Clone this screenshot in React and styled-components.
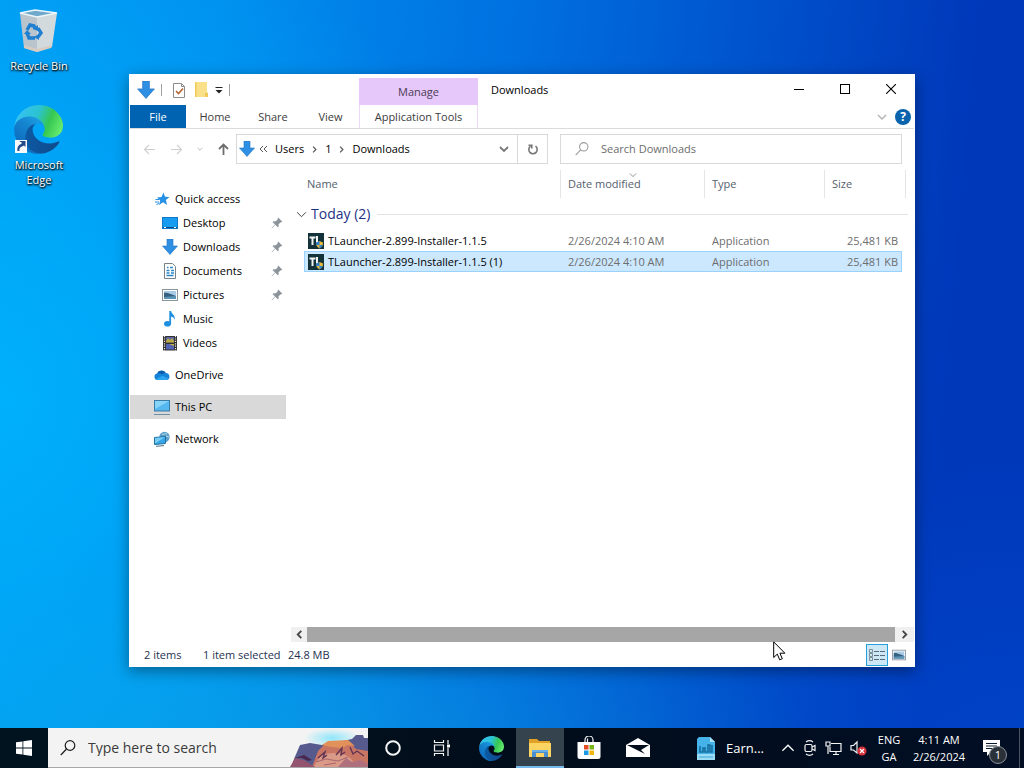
import React from 'react'
import styled, { createGlobalStyle, css } from 'styled-components'

const GlobalStyle = createGlobalStyle`
  * {
    box-sizing: border-box;
  }

  body {
    margin: 0;
    font-family: 'Open Sans', 'Noto Sans', sans-serif;
    font-size: 11px;
    line-height: 16px;
    color: #1b1b1b;
  }

  button,
  input {
    font: inherit;
    color: inherit;
    margin: 0;
    padding: 0;
    border: 0;
    background: none;
    outline: none;
  }

  a {
    color: inherit;
    text-decoration: none;
  }

  svg {
    display: block;
    flex: none;
  }
`

const Screen = styled.div`
  display: flex;
  flex-direction: column;
  height: 100vh;
  overflow: hidden;
  background:
    radial-gradient(ellipse 50% 30% at 30% 100%, rgba(20, 180, 225, 0.4), rgba(20, 180, 225, 0) 100%),
    radial-gradient(ellipse 40% 40% at 100% 100%, rgba(0, 90, 225, 0.35), rgba(0, 90, 225, 0) 100%),
    radial-gradient(ellipse 50% 70% at 0% 52%, rgba(0, 184, 255, 0.75), rgba(0, 170, 255, 0) 100%),
    linear-gradient(95deg, #009af2 0%, #008eee 20%, #0070e0 48%, #0052cc 70%, #0038ba 90%, #0038ba 100%);
`

const Desktop = styled.main`
  position: relative;
  flex: 1;
  min-height: 0;
`

const Shortcuts = styled.nav`
  display: flex;
  flex-direction: column;
  align-items: center;
  gap: 32px;
  width: 78px;
  padding-top: 8px;
`

const Shortcut = styled.a`
  display: flex;
  flex-direction: column;
  align-items: center;
  gap: 2px;
  color: #fff;
  line-height: 15px;
  text-align: center;
  text-shadow: 0 1px 2px #000, 1px 1px 2px #000;
`

const Window = styled.section`
  position: absolute;
  top: 74px;
  right: 109px;
  bottom: 61px;
  left: 129px;
  display: flex;
  flex-direction: column;
  padding: 0 1px;
  background: #fff;
  box-shadow: 0 4px 14px rgba(0, 0, 0, 0.4);
`

const TitleBar = styled.header`
  display: flex;
  height: 31px;
`

const QuickTools = styled.div`
  display: flex;
  align-items: center;
  gap: 6px;
  width: 229px;
  padding-left: 7px;
`

const Divider = styled.span`
  width: 1px;
  height: 12px;
  margin-right: 3px;
  background: #a0a0a0;
`

const ToolButton = styled.button`
  display: flex;
  align-items: center;
  justify-content: center;
`

const ManageTab = styled.div`
  display: flex;
  align-items: center;
  justify-content: center;
  width: 119px;
  margin-top: 4px;
  background: #e7c8fb;
  color: #4a3b55;
`

const Title = styled.h1`
  flex: 1;
  margin: 0;
  padding: 8px 0 0 13px;
  font-size: 11px;
  font-weight: 400;
  color: #000;
`

const WindowButton = styled.button`
  display: flex;
  align-items: center;
  justify-content: center;
  width: 46px;
  height: 30px;
`

const Ribbon = styled.div`
  display: flex;
  height: 24px;
  border-bottom: 1px solid #dadbdc;
`

const Tab = styled.button`
  width: ${props => props.$width}px;
  height: 23px;
  color: #3c3c3c;

  ${props => props.$kind === 'file' && css`
    background: #0063b1;
    color: #fff;
  `}

  ${props => props.$kind === 'tools' && css`
    border: solid #ecd9f8;
    border-width: 0 1px;
  `}
`

const RibbonEnd = styled.div`
  display: flex;
  align-items: center;
  gap: 8px;
  margin-left: auto;
  padding-right: 3px;
`

const HelpButton = styled.button`
  width: 16px;
  height: 16px;
  border-radius: 50%;
  background: #0a64ad;
  color: #fff;
  font-size: 12px;
  font-weight: 700;
`

const Navigation = styled.div`
  display: grid;
  grid-template-columns: 106px minmax(0, 312fr) 12px minmax(0, 342fr);
  height: 41px;
  padding: 5px 12px 6px 0;
`

const History = styled.div`
  display: flex;
  align-items: center;
  justify-content: space-between;
  padding: 0 6px 0 13px;
`

const Address = styled.div`
  display: flex;
  align-items: center;
  border: 1px solid #d9d9d9;
`

const Crumbs = styled.div`
  display: flex;
  flex: 1;
  align-items: center;
  gap: 7px;
  padding-left: 2px;
  color: #000;
`

const CrumbRoot = styled.span`
  display: flex;
  align-items: center;
  gap: 4px;
`

const Refresh = styled.button`
  display: flex;
  align-items: center;
  justify-content: center;
  align-self: stretch;
  width: 30px;
  margin-left: 8px;
  border-left: 1px solid #d9d9d9;
`

const SearchBox = styled.label`
  display: flex;
  grid-column: 4;
  align-items: center;
  gap: 12px;
  padding-left: 14px;
  border: 1px solid #d9d9d9;

  input {
    flex: 1;
    min-width: 0;
  }

  input::placeholder {
    color: #6d6d6d;
    opacity: 1;
  }
`

const Body = styled.div`
  display: flex;
  flex: 1;
  min-height: 0;
`

const Tree = styled.nav`
  display: flex;
  flex-direction: column;
  width: 156px;
  padding-top: 17px;
  color: #000;
`

const TreeItem = styled.a`
  display: flex;
  align-items: center;
  gap: 5px;
  height: 24px;
  margin-top: ${props => (props.$root ? 8 : 0)}px;
  padding: 0 3px 0 ${props => (props.$child ? 32 : 24)}px;
  background: ${props => (props.$active ? '#d9d9d9' : 'transparent')};

  span {
    flex: 1;
  }
`

const Pane = styled.div`
  display: flex;
  flex: 1;
  flex-direction: column;
  min-width: 0;
  padding-left: 5px;
`

const Listing = styled.div`
  flex: 1;
  min-height: 0;
  padding: 0 6px 0 5px;
  overflow: hidden;
`

const Table = styled.table`
  display: block;
  border-spacing: 0;

  thead,
  tbody {
    display: block;
  }

  th,
  td {
    padding: 0;
    font-weight: 400;
    text-align: left;
  }
`

const columns = css`
  display: grid;
  grid-template-columns: 257px 144px 120px 1fr;
  align-items: center;
  margin-left: 8px;
`

const HeadRow = styled.tr`
  ${columns}
  height: 28px;
  margin-right: 2px;
`

const HeadCell = styled.th`
  position: relative;
  height: 28px;
  line-height: 28px;
  border-right: 1px solid #e5e5e5;
  color: #53616e;

  && {
    padding-left: ${props => (props.$first ? 3 : 7)}px;
  }

  svg {
    position: absolute;
    top: 1px;
    left: 50%;
    margin-left: -4px;
  }
`

const GroupRow = styled.tr`
  display: block;

  th {
    display: flex;
    align-items: center;
    gap: 4px;
    height: 32px;
    color: #1e3287;
    font-size: 14px;
  }

  th::after {
    content: '';
    flex: 1;
    height: 1px;
    margin-left: 3px;
    background: #e2e2e2;
  }
`

const FileRow = styled.tr`
  ${columns}
  height: 21px;
  margin-right: 6px;
  border: 1px solid ${props => (props.$selected ? '#99d1ff' : 'transparent')};
  background: ${props => (props.$selected ? '#cce8ff' : 'transparent')};
  color: #6d6d6d;

  && td {
    padding-left: 6px;
  }

  && td:first-child {
    display: flex;
    align-items: center;
    gap: 4px;
    padding-left: 3px;
    color: #000;
  }

  && td:last-child {
    padding-right: 3px;
    text-align: right;
  }
`

const ScrollBar = styled.div`
  display: flex;
  height: 15px;
  background: #f0f0f0;
`

const ScrollButton = styled.button`
  display: flex;
  align-items: center;
  justify-content: center;
  width: ${props => props.$width}px;
`

const Thumb = styled.div`
  flex: 1;
  background: #a6a6a6;
`

const StatusBar = styled.footer`
  display: flex;
  align-items: center;
  height: 25px;
  padding: 0 4px 0 14px;
  color: #1e3250;
`

const Status = styled.span`
  width: ${props => props.$width}px;
  white-space: nowrap;
`

const ViewButton = styled.button`
  display: flex;
  align-items: center;
  justify-content: center;
  width: 22px;
  height: 22px;
  border: 1px solid ${props => (props.$active ? '#26a0da' : 'transparent')};
  background: ${props => (props.$active ? '#cce8f6' : 'transparent')};
`

const ViewButtons = styled.div`
  display: flex;
  margin-left: auto;
`

const Pointer = styled.svg`
  position: absolute;
  top: 641px;
  left: 773px;
`

const TaskBar = styled.footer`
  display: flex;
  height: 40px;
  background: linear-gradient(90deg, #00131f, #020d1b 50%, #010e24);
  color: #fff;
`

const TaskSearch = styled.label`
  display: flex;
  align-items: center;
  gap: 12px;
  width: 320px;
  padding-left: 12px;
  background: #f3f3f3;
  box-shadow: inset 0 -1px #a8a8a8;
  color: #1b1b1b;
  font-size: 14px;

  input {
    flex: 1;
    min-width: 0;
  }

  input::placeholder {
    color: #3b3b3b;
    opacity: 1;
  }
`

const TaskButtons = styled.div`
  display: flex;
  gap: 1px;
  padding-left: 1px;
`

const TaskButton = styled.button`
  display: flex;
  align-items: center;
  justify-content: center;
  width: 48px;
  height: 40px;
  background: ${props => (props.$active ? '#34434e' : 'transparent')};
  box-shadow: ${props => (props.$active ? 'inset 0 -2px #76b9ed' : 'none')};
`

const Tray = styled.div`
  display: flex;
  align-items: center;
  margin-left: auto;
`

const News = styled.button`
  display: flex;
  align-items: center;
  gap: 10px;
  margin-right: 17px;
  font-size: 13px;
`

const TrayIcons = styled.div`
  display: flex;
  align-items: center;
  gap: 8px;
  margin-right: 10px;
`

const TrayText = styled.button`
  width: ${props => props.$width}px;
  line-height: 17px;
  text-align: center;
`

const Notifications = styled.button`
  position: relative;
  display: flex;
  align-items: flex-start;
  width: 42px;
  height: 40px;
  padding: 11px 0 0 6px;
`

const Badge = styled.span`
  position: absolute;
  top: 18px;
  left: 12px;
  width: 18px;
  height: 18px;
  border: 1px solid #8a9098;
  border-radius: 50%;
  background: #2b3138;
  text-align: center;
`

const ShowDesktop = styled.button`
  width: 5px;
  height: 40px;
  border-left: 1px solid #4b5563;
`

function EdgeIcon({ size, id }) {
  return (
    <svg width={size} height={size} viewBox="0 0 256 256">
      <defs>
        <linearGradient id={`${id}-a`} x1="60" y1="180" x2="231" y2="180" gradientUnits="userSpaceOnUse">
          <stop offset="0" stopColor="#0c59a4" />
          <stop offset="1" stopColor="#114a8b" />
        </linearGradient>
        <linearGradient id={`${id}-b`} x1="150" y1="90" x2="40" y2="220" gradientUnits="userSpaceOnUse">
          <stop offset="0" stopColor="#1b9de2" />
          <stop offset="0.4" stopColor="#1484cf" />
          <stop offset="1" stopColor="#0f6cbf" />
        </linearGradient>
        <linearGradient id={`${id}-c`} x1="20" y1="50" x2="240" y2="140" gradientUnits="userSpaceOnUse">
          <stop offset="0" stopColor="#35c1f1" />
          <stop offset="0.4" stopColor="#2bc3d2" />
          <stop offset="0.7" stopColor="#36c752" />
          <stop offset="1" stopColor="#66eb6e" />
        </linearGradient>
      </defs>
      <path fill={`url(#${id}-b)`} d="M105.73 241.42a79.2 79.2 0 0 1-22.74-21.34 80.72 80.72 0 0 1 29.96-120.04c3.13-1.47 8.45-4.13 15.54-4a32.36 32.36 0 0 1 25.69 13 31.88 31.88 0 0 1 6.36 18.66c0-.21 24.46-79.6-80-79.6-43.9 0-80 41.66-80 78.22a130.16 130.16 0 0 0 12.11 56 128 128 0 0 0 156.38 67.11 75.55 75.55 0 0 1-62.78-8z" />
      <path fill={`url(#${id}-a)`} d="M231.05 190.54c-3.38 1.76-6.86 3.32-10.43 4.67a101.22 101.22 0 0 1-35.63 6.46c-46.98 0-87.9-32.32-87.9-73.79a31.4 31.4 0 0 1 16.37-27.31c-42.49 1.79-53.4 46.07-53.4 72.01 0 73.34 67.59 80.78 82.15 80.78 7.86 0 19.7-2.28 26.81-4.53l1.3-.44a128.34 128.34 0 0 0 66.48-52.8 4 4 0 0 0-5.75-5.05z" />
      <path fill={`url(#${id}-c)`} d="M152.33 148.86c-.81 1.05-3.3 2.5-3.3 5.66 0 2.61 1.7 5.12 4.72 7.23 14.38 10 41.49 8.68 41.56 8.68a59.56 59.56 0 0 0 30.27-8.35A61.38 61.38 0 0 0 256 109.32c.26-22.41-8-37.31-11.34-43.91C223.46 23.93 177.72 0 128 0A128 128 0 0 0 0 126.2c.48-36.54 36.8-66.05 80-66.05 3.5 0 23.46.34 42 10.07 16.34 8.58 24.9 18.94 30.85 29.21 6.18 10.67 7.28 24.15 7.28 29.52 0 5.37-2.74 13.33-7.8 19.91z" />
    </svg>
  )
}

function BinIcon() {
  return (
    <svg width="48" height="48" viewBox="0 0 48 48">
      <path d="M5 5l17 3v36l-3-1-10-3z" fill="#b9c4cc" />
      <path d="M22 8l20-3-5 34-15 5z" fill="#d3dade" />
      <path d="M9 37l13 4 15-4-1 3-14 4-13-4z" fill="#d8cbc2" />
      <path d="M5 5l15-3 22 3-20 4z" fill="#6fa9cc" stroke="#eef6fa" strokeWidth="1.4" />
      <g fill="none" stroke="#1f7fd0" strokeWidth="3.4">
        <path d="M12 22l3-5 4 1 1 3" />
        <path d="M23 20l3 5-3 4" />
        <path d="M20 30l-6 0-2-5" />
      </g>
      <path d="M18 21l5 2 0-6zM24 26l-5 3 5 3zM9 26l3-4 4 4z" fill="#1f7fd0" />
    </svg>
  )
}

function EdgeShortcutIcon() {
  return (
    <svg width="50" height="50" viewBox="0 0 50 50">
      <EdgeIcon size={49} id="edge-desktop" />
      <rect x="1" y="35" width="12" height="13" fill="#f7f9fb" />
      <path d="M3.500 46c-.5-4 1-6.500 4-7V37H6l-.5-1h6v6l-1.500-1.500-1.500.8C6 42 5 43.500 5.500 46z" fill="#244a8c" />
    </svg>
  )
}

function DownArrow({ size = 16 }) {
  return (
    <svg width={size} height={size} viewBox="0 0 16 16">
      <path d="M5 0h6v7h4.500L8 15.500.5 7H5z" fill="#2f8fe3" stroke="#2273c4" strokeWidth=".6" />
    </svg>
  )
}

function Chevron({ dir = 'down', size = 10, color = '#555', width = 1 }) {
  const turn = { down: 0, left: 90, up: 180, right: 270 }[dir]
  return (
    <svg width={size} height={size} viewBox="0 0 10 10">
      <path d="M1 3l4 4 4-4" fill="none" stroke={color} strokeWidth={width} transform={`rotate(${turn} 5 5)`} />
    </svg>
  )
}

function Arrow({ dir, color }) {
  const turn = { left: 0, up: 90, right: 180 }[dir]
  return (
    <svg width="13" height="13" viewBox="0 0 13 13">
      <g transform={`rotate(${turn} 6.500 6.500)`} fill="none" stroke={color} strokeWidth={dir === 'up' ? 1.8 : 1.1}>
        <path d="M1.500 6.500H12M6 2L1.500 6.500 6 11" />
      </g>
    </svg>
  )
}

function Lens({ size, color }) {
  return (
    <svg width={size} height={size} viewBox="0 0 16 16" fill="none" stroke={color} strokeWidth="1.200">
      <circle cx="10" cy="5.500" r="4.800" />
      <path d="M6.500 9L.8 15" />
    </svg>
  )
}

function PinIcon() {
  return (
    <svg width="12" height="12" viewBox="0 0 12 12" fill="#8c949b">
      <path d="M7.500.8l3.700 3.700-.8.9-.8-.2-2 2 .1 2.200-.9.8-2.400-2.400L1 11.300l-.4-.4 3.400-3.500L1.700 5l.8-.8 2.300.1 2-2-.2-.7z" />
    </svg>
  )
}

function PictureIcon({ size = 16 }) {
  return (
    <svg width={size} height={size} viewBox="0 0 16 16">
      <rect x=".5" y="2.500" width="15" height="11" fill="#fff" stroke="#8a959e" />
      <rect x="2" y="4" width="12" height="8" fill="#a9cbe6" />
      <path d="M2 6c3-1 6 1 12 3v3H2z" fill="#35607f" />
      <path d="M2 10l12-1v3H2z" fill="#5c94b8" />
    </svg>
  )
}

const treeIcons = {
  quick: (
    <svg width="16" height="16" viewBox="0 0 16 16">
      <path d="M9.500 1.500l1.500 4.200 4.500.3-3.600 3 1.200 5-4-2.700L5 14l1.200-4.600L3 6.400l4.500-.5z" fill="#2590e4" />
      <path d="M1.500 8.500h3.500M1 11h4M2.500 13.500l2.500-1" stroke="#2590e4" />
    </svg>
  ),
  desktop: (
    <svg width="16" height="16" viewBox="0 0 16 16">
      <rect x=".5" y="2.500" width="15" height="11" fill="#189cf0" stroke="#0f78c8" />
      <path d="M1 12.500h14" stroke="#0a4c86" />
      <path d="M2 12.500h2m8 0h2" stroke="#fff" />
    </svg>
  ),
  downloads: <DownArrow />,
  documents: (
    <svg width="16" height="16" viewBox="0 0 16 16">
      <path d="M2.500.5h8l3 3v12h-11z" fill="#fff" stroke="#77828b" />
      <path d="M8 4.500h3M5 4.500h1.500M4.500 7.500h3M9 7.500h3M4.500 10h3M9 10h3M4.500 12.500h7" stroke="#2d86c8" strokeWidth="1.400" />
    </svg>
  ),
  pictures: <PictureIcon />,
  music: (
    <svg width="16" height="16" viewBox="0 0 16 16">
      <ellipse cx="5.500" cy="12.700" rx="3.500" ry="2.800" fill="#1e8fe0" />
      <path d="M7.300 0h1.800c.2 3 4.500 4 3.700 9-.7-2.500-2-3-3.700-3.500v7.500H7.300z" fill="#1e8fe0" />
    </svg>
  ),
  videos: (
    <svg width="16" height="16" viewBox="0 0 16 16">
      <rect x="1" y="1" width="14" height="14.500" fill="#32302f" />
      <path d="M2.500 1v15M13.500 1v15" stroke="#e8e8e8" strokeWidth="1.200" strokeDasharray="1.200 1.200" />
      <rect x="4" y="2" width="8" height="5.500" fill="#5a63a8" />
      <rect x="4" y="9" width="8" height="5.500" fill="#5363b4" />
      <path d="M4 6l2-3 2 2 2-2 2 3v1.500H4z" fill="#b9aa42" />
      <path d="M7 9h5v2z" fill="#c5b24a" />
    </svg>
  ),
  onedrive: (
    <svg width="16" height="16" viewBox="0 0 16 16">
      <path d="M3.500 13A3.300 3.300 0 0 1 3 6.500 5 5 0 0 1 11.800 6 3.600 3.600 0 0 1 13 13z" fill="#1583d8" />
      <path d="M3 6.600A5 5 0 0 1 11.800 6c-1.500 0-2.500.5-3.500 1.300C6.500 6.200 4.800 6.200 3 6.600z" fill="#0a5cac" />
      <path d="M2 12l6.500-3.300 6 2.900c-.5 1-1 1.400-2 1.400h-9z" fill="#29a6ee" />
    </svg>
  ),
  pc: (
    <svg width="16" height="16" viewBox="0 0 16 16">
      <rect x=".5" y="1.500" width="15" height="10.500" fill="#55b8ee" stroke="#3c7ba6" />
      <path d="M1 2h14L1 10z" fill="#86d4f8" />
      <path d="M0 15.500h16" stroke="#6d8da3" />
    </svg>
  ),
  network: (
    <svg width="16" height="16" viewBox="0 0 16 16">
      <circle cx="10.500" cy="6" r="5.200" fill="#5b9fc9" />
      <path d="M8 3c2 1 3-1 5 0M12 5l3 1" stroke="#b9dceb" fill="none" />
      <path d="M.5 6.500l11-1v7l-11 1z" fill="#35a5e8" stroke="#226f9f" />
      <path d="M1 7l10-1-9 6H1z" fill="#77cdf6" />
      <path d="M2 15.300l8-.7" stroke="#45718c" />
    </svg>
  ),
}

const tree = [
  { icon: 'quick', label: 'Quick access' },
  { icon: 'desktop', label: 'Desktop', child: true, pinned: true },
  { icon: 'downloads', label: 'Downloads', child: true, pinned: true },
  { icon: 'documents', label: 'Documents', child: true, pinned: true },
  { icon: 'pictures', label: 'Pictures', child: true, pinned: true },
  { icon: 'music', label: 'Music', child: true },
  { icon: 'videos', label: 'Videos', child: true },
  { icon: 'onedrive', label: 'OneDrive', root: true },
  { icon: 'pc', label: 'This PC', root: true, active: true },
  { icon: 'network', label: 'Network', root: true },
]

const files = [
  { name: 'TLauncher-2.899-Installer-1.1.5' },
  { name: 'TLauncher-2.899-Installer-1.1.5 (1)', selected: true },
]

function InstallerIcon() {
  return (
    <svg width="16" height="16" viewBox="0 0 16 16">
      <rect width="16" height="16" fill="#14323a" />
      <path d="M1.500 4.500h6M4.500 4v8M9 3v7" stroke="#f2f6f7" strokeWidth="2" />
      <path d="M8 9.500l3.500-1.500L15 9.500c0 3-1 4.500-3.500 6C9 14 8 12.500 8 9.500z" fill="#e9bd3a" />
      <path d="M11.500 8v4H8.300C8 11 8 10 8 9.500zM11.500 12h3.200c-.5 1.500-1.500 2.500-3.200 3.500z" fill="#2d7fd0" />
    </svg>
  )
}

function Explorer() {
  return (
    <Window aria-label="Downloads">
      <TitleBar>
        <QuickTools>
          <DownArrow size={18} />
          <Divider />
          <ToolButton aria-label="Properties">
            <svg width="16" height="16" viewBox="0 0 16 16">
              <path d="M2.500 1.500h8l3 3v11h-11z" fill="#fff" stroke="#8c8c8c" />
              <path d="M10.500 1.500v3h3" fill="none" stroke="#8c8c8c" />
              <path d="M5 9l2.500 2.500L12 6.500" fill="none" stroke="#b5652f" strokeWidth="1.600" />
            </svg>
          </ToolButton>
          <ToolButton aria-label="New folder">
            <svg width="16" height="16" viewBox="0 0 16 16">
              <path d="M2 0h12v10l1 1v4H2z" fill="#fbe08a" />
              <path d="M2 0h1.500v15H2zM12 11h3v4h-3z" fill="#f0ca58" />
            </svg>
          </ToolButton>
          <ToolButton aria-label="Customize toolbar">
            <svg width="8" height="8" viewBox="0 0 8 8">
              <path d="M.5 1.500h7" stroke="#222" />
              <path d="M.5 4h7L4 7.500z" fill="#222" />
            </svg>
          </ToolButton>
          <Divider />
        </QuickTools>
        <ManageTab>Manage</ManageTab>
        <Title>Downloads</Title>
        <WindowButton aria-label="Minimize">
          <svg width="10" height="10"><path d="M0 5.500h10" stroke="#000" /></svg>
        </WindowButton>
        <WindowButton aria-label="Maximize">
          <svg width="10" height="10"><rect x=".5" y=".5" width="9" height="9" fill="none" stroke="#000" /></svg>
        </WindowButton>
        <WindowButton aria-label="Close">
          <svg width="10" height="10"><path d="M0 0l10 10m0-10L0 10" stroke="#000" strokeWidth="1.100" /></svg>
        </WindowButton>
      </TitleBar>

      <Ribbon>
        <Tab $kind="file" $width={56}>File</Tab>
        <Tab $width={58}>Home</Tab>
        <Tab $width={58}>Share</Tab>
        <Tab $width={57}>View</Tab>
        <Tab $kind="tools" $width={119}>Application Tools</Tab>
        <RibbonEnd>
          <Chevron color="#b4b4b4" width={1.500} />
          <HelpButton aria-label="Help">?</HelpButton>
        </RibbonEnd>
      </Ribbon>

      <Navigation>
        <History>
          <ToolButton aria-label="Back"><Arrow dir="left" color="#cfcfcf" /></ToolButton>
          <ToolButton aria-label="Forward"><Arrow dir="right" color="#cfcfcf" /></ToolButton>
          <ToolButton aria-label="Recent locations"><Chevron size={6} color="#b5b5b5" width={1.500} /></ToolButton>
          <ToolButton aria-label="Up"><Arrow dir="up" color="#6e6e6e" /></ToolButton>
        </History>
        <Address>
          <Crumbs>
            <CrumbRoot>
              <DownArrow />
              <svg width="9" height="8" viewBox="0 0 9 8">
                <path d="M4 1L1 4l3 3M8 1L5 4l3 3" fill="none" stroke="#555" />
              </svg>
            </CrumbRoot>
            <a href="#users">Users</a>
            <Chevron dir="right" size={7} width={1.700} />
            <a href="#1">1</a>
            <Chevron dir="right" size={7} width={1.700} />
            <a href="#downloads">Downloads</a>
          </Crumbs>
          <ToolButton aria-label="Previous locations"><Chevron color="#777" width={1.800} /></ToolButton>
          <Refresh aria-label="Refresh">
            <svg width="12" height="12" viewBox="0 0 12 12" fill="none" stroke="#777" strokeWidth="1.600">
              <path d="M8.500 3.200a4.200 4.200 0 1 1-5 0" />
              <path d="M1.500 2.200h3.300v3.300" />
            </svg>
          </Refresh>
        </Address>
        <SearchBox>
          <Lens size={14} color="#9a9a9a" />
          <input type="text" placeholder="Search Downloads" aria-label="Search Downloads" />
        </SearchBox>
      </Navigation>

      <Body>
        <Tree>
          {tree.map(item => (
            <TreeItem
              key={item.label}
              href={`#${item.icon}`}
              $child={item.child}
              $root={item.root}
              $active={item.active}
            >
              {treeIcons[item.icon]}
              <span>{item.label}</span>
              {item.pinned && <PinIcon />}
            </TreeItem>
          ))}
        </Tree>
        <Pane>
          <Listing>
            <Table>
              <thead>
                <HeadRow>
                  <HeadCell $first>Name</HeadCell>
                  <HeadCell>
                    Date modified
                    <Chevron size={8} color="#7a7a7a" />
                  </HeadCell>
                  <HeadCell>Type</HeadCell>
                  <HeadCell>Size</HeadCell>
                </HeadRow>
              </thead>
              <tbody>
                <GroupRow>
                  <th colSpan="4">
                    <Chevron size={11} color="#444" width={0.9} />
                    Today (2)
                  </th>
                </GroupRow>
                {files.map(file => (
                  <FileRow key={file.name} $selected={file.selected}>
                    <td>
                      <InstallerIcon />
                      {file.name}
                    </td>
                    <td>2/26/2024 4:10 AM</td>
                    <td>Application</td>
                    <td>25,481 KB</td>
                  </FileRow>
                ))}
              </tbody>
            </Table>
          </Listing>
          <ScrollBar>
            <ScrollButton $width={16} aria-label="Scroll left"><Chevron dir="left" size={9} color="#444" width={2} /></ScrollButton>
            <Thumb />
            <ScrollButton $width={19} aria-label="Scroll right"><Chevron dir="right" size={9} color="#444" width={2} /></ScrollButton>
          </ScrollBar>
        </Pane>
      </Body>

      <StatusBar>
        <Status $width={59}>2 items</Status>
        <Status $width={85}>1 item selected</Status>
        <Status>24.8 MB</Status>
        <ViewButtons>
          <ViewButton $active aria-label="Details">
            <svg width="18" height="14" viewBox="0 0 18 14" fill="none" stroke="#5c6b78">
              <path d="M1.500 1.500h3v3h-3zM1.500 5.500h3v3h-3zM1.500 9.500h3v3h-3z" stroke="#7d8b96" />
              <path d="M6 3.500h5M12 3.500h5M6 7.500h5M12 7.500h5M6 11.500h5M12 11.500h5" />
            </svg>
          </ViewButton>
          <ViewButton aria-label="Large icons"><PictureIcon size={14} /></ViewButton>
        </ViewButtons>
      </StatusBar>
    </Window>
  )
}

function Canyon() {
  return (
    <svg width="78" height="38" viewBox="0 0 78 38">
      <defs>
        <radialGradient id="canyon-sky">
          <stop offset="0" stopColor="#8fe6fa" />
          <stop offset="1" stopColor="#8fe6fa" stopOpacity="0" />
        </radialGradient>
      </defs>
      <ellipse cx="42" cy="9" rx="28" ry="10" fill="url(#canyon-sky)" />
      <path d="M4 30l6-14 10-2 12 2 30-6 4-4h7l1 3h4v29H2z" fill="#565a8c" />
      <path d="M22 38l6-16 8-8 22-2 8 8 12 2v16z" fill="#c97563" />
      <path d="M32 16l6-4 20-1 7 6-8-1-4 3-12-1z" fill="#e2915b" />
      <path d="M24 38c4-10 9-14 20-14s18 4 22 14z" fill="#d99a87" />
      <path d="M28 29l7-6-2 6 4-3M46 26l6-7-1 7 4-3M60 18l3 7 4-3 7 5" fill="none" stroke="#613453" strokeWidth="1.400" />
      <path d="M26 33l10-3 12 2 10-4M34 36l12-2" fill="none" stroke="#a86570" />
      <path d="M0 38l5-9 9 2 11 7z" fill="#94536e" />
      <path d="M5 29l9-3 8 5-4 1-6-3z" fill="#49284e" />
      <path d="M48 38l8-9 6 4 8-2 8 4v3z" fill="#b06f7d" />
    </svg>
  )
}

function Taskbar() {
  return (
    <TaskBar>
      <TaskButton aria-label="Start">
        <svg width="16" height="16" viewBox="0 0 16 16" fill="#fff">
          <path d="M0 2.300l6.500-.9v6.200H0zM7.300 1.300L16 0v7.600H7.300zM0 8.400h6.500v6.200L0 13.700zM7.300 8.400H16V16l-8.700-1.300z" />
        </svg>
      </TaskButton>
      <TaskSearch>
        <Lens size={16} color="#1b1b1b" />
        <input type="text" placeholder="Type here to search" aria-label="Type here to search" />
        <Canyon />
      </TaskSearch>
      <TaskButtons>
        <TaskButton aria-label="Cortana">
          <svg width="16" height="16"><circle cx="8" cy="8" r="6.800" fill="none" stroke="#f4f4f4" strokeWidth="2" /></svg>
        </TaskButton>
        <TaskButton aria-label="Task view">
          <svg width="18" height="16" viewBox="0 0 18 16" fill="none" stroke="#f4f4f4" strokeWidth="1.200">
            <path d="M1.500 0v2.500h9V0M1.500 16v-2.500h9V16M1.500 5h9v6h-9zM15 0v4M15 8v8" />
            <path d="M14 4.500h3v3h-3z" fill="#fff" stroke="none" />
          </svg>
        </TaskButton>
        <TaskButton aria-label="Microsoft Edge"><EdgeIcon size={25} id="edge-taskbar" /></TaskButton>
        <TaskButton $active aria-label="File Explorer">
          <svg width="24" height="20" viewBox="0 0 24 20">
            <path d="M1 1h8l2 2h11v4H1z" fill="#e0a126" />
            <path d="M1 5h22v14H1z" fill="#fcd462" />
            <path d="M4 19v-7h16v7h-4v-4H8v4z" fill="#4a90cf" />
            <path d="M4 12h16v2H4z" fill="#69aee6" />
          </svg>
        </TaskButton>
        <TaskButton aria-label="Microsoft Store">
          <svg width="24" height="24" viewBox="0 0 24 24">
            <path d="M8 7V4a4 4 0 0 1 8 0v3M10.500 6V2.500" fill="none" stroke="#f4f4f4" strokeWidth="1.200" />
            <path d="M.5 6h23v14.500a2.500 2.500 0 0 1-2.500 2.500H3a2.500 2.500 0 0 1-2.500-2.500z" fill="#fff" />
            <path d="M7 9h4.500v4.500H7z" fill="#e34c26" />
            <path d="M12.500 9H17v4.500h-4.500z" fill="#7bb518" />
            <path d="M7 14.500h4.500V19H7z" fill="#1d9be2" />
            <path d="M12.500 14.500H17V19h-4.500z" fill="#f6b60d" />
          </svg>
        </TaskButton>
        <TaskButton aria-label="Mail">
          <svg width="24" height="20" viewBox="0 0 24 20">
            <path d="M0 7l12-7 12 7v12H0z" fill="#fff" />
            <path d="M1 7h22l-8 5 4 4-8-4z" fill="#020d1b" />
          </svg>
        </TaskButton>
      </TaskButtons>

      <Tray>
        <News>
          <svg width="20" height="25" viewBox="0 0 20 25">
            <path d="M3 1h11l5 5v18H1V3z" fill="#45b3ea" />
            <path d="M14 1v5h5z" fill="#a8e2fa" />
            <path d="M4 10v6h3v-4h2v4h3v-7h2v7h2V9" fill="none" stroke="#166f9f" strokeWidth="1.600" />
            <path d="M1 18h18v6H1z" fill="#9bdcf7" />
            <path d="M3 21h14" stroke="#3fa5d4" />
          </svg>
          Earn...
        </News>
        <TrayIcons>
          <Chevron dir="up" size={14} color="#fff" width={0.9} />
          <svg width="14" height="16" viewBox="0 0 14 16" fill="none" stroke="#f4f4f4" strokeWidth="1.200">
            <rect x="2" y="4.500" width="7" height="7" rx="1.500" />
            <path d="M9 7l3-1.500v5L9 9M3 2c2-1.500 5-1.500 7 0M3 14c2 1.500 5 1.500 7 0" />
          </svg>
          <svg width="17" height="15" viewBox="0 0 17 15" fill="none" stroke="#f4f4f4" strokeWidth="1.200">
            <path d="M6 2.500h10v8H5V6M8 13.500h6M11 10.500v3M1 1h4v4H1zM3 5v8" />
          </svg>
          <svg width="17" height="16" viewBox="0 0 17 16">
            <path d="M1 5.500h2.500L7 2v11L3.500 10H1z" fill="none" stroke="#f4f4f4" strokeWidth="1.200" />
            <circle cx="12" cy="11" r="4.500" fill="#d8303a" />
            <path d="M10 9l4 4m0-4l-4 4" stroke="#fff" strokeWidth="1.200" />
          </svg>
        </TrayIcons>
        <TrayText $width={24}>ENG GA</TrayText>
        <TrayText $width={76}>4:11 AM 2/26/2024</TrayText>
        <Notifications aria-label="Notifications">
          <svg width="18" height="18" viewBox="0 0 18 18">
            <path d="M0 1h17v12H8l-4 4v-4H0z" fill="#fff" />
            <path d="M3 4.500h11M3 7h11M3 9.500h7" stroke="#0b1a2a" />
          </svg>
          <Badge>1</Badge>
        </Notifications>
        <ShowDesktop aria-label="Show desktop" />
      </Tray>
    </TaskBar>
  )
}

export default function App() {
  return (
    <Screen>
      <GlobalStyle />
      <Desktop>
        <Shortcuts>
          <Shortcut href="#recycle-bin">
            <BinIcon />
            Recycle Bin
          </Shortcut>
          <Shortcut href="#edge">
            <EdgeShortcutIcon />
            Microsoft<br />Edge
          </Shortcut>
        </Shortcuts>
        <Explorer />
        <Pointer width="13" height="20" viewBox="0 0 13 20">
          <path d="M.7.900v15.600l3.600-3.400 2.400 5.700 2.600-1.100-2.400-5.500h5z" fill="#fff" stroke="#000" />
        </Pointer>
      </Desktop>
      <Taskbar />
    </Screen>
  )
}
